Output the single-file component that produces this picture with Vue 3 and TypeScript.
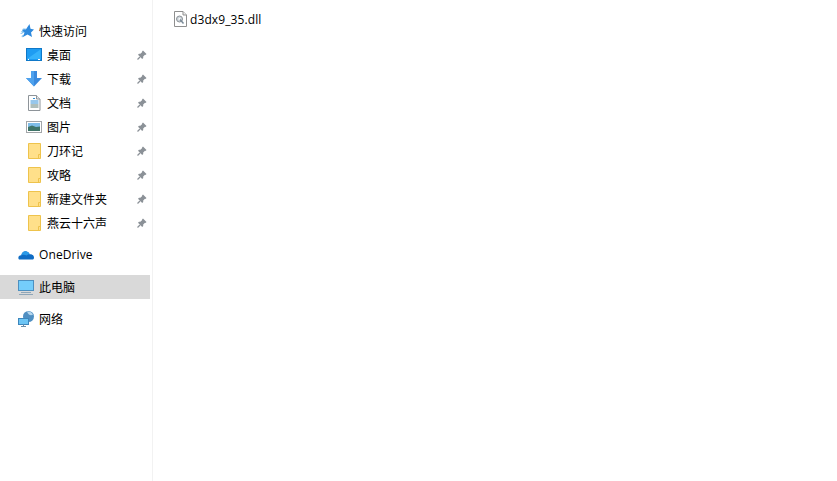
<script setup lang="ts">
interface NavItem {
  label: string
  icon: string
}

const pinned: NavItem[] = [
  { label: '桌面', icon: 'desktop' },
  { label: '下载', icon: 'download' },
  { label: '文档', icon: 'document' },
  { label: '图片', icon: 'picture' },
  { label: '刀环记', icon: 'folder' },
  { label: '攻略', icon: 'folder' },
  { label: '新建文件夹', icon: 'folder' },
  { label: '燕云十六声', icon: 'folder' },
]
</script>

<template>
  <div class="explorer">
    <aside class="sidebar">
      <div class="row top">
        <svg class="icon" viewBox="0 0 16 16">
          <path d="M3 8h3.500L6 9.500 3.500 11 2 10.500 4 9.500zM5 5.500h3L6.500 7.500H4zM3.500 13l2-1.500.5 1.500-2 1.500z" fill="#8cc6f0" />
          <path d="M11.500 1l1 4.700 3.500.8-3 3 1 4.500-4.500-2.500L5 14l1.500-4.500L4 7l4-.8z" fill="#2e8ade" />
        </svg>
        <span class="label">快速访问</span>
      </div>

      <div v-for="item in pinned" :key="item.label" class="row sub">
        <svg class="icon" viewBox="0 0 16 16">
          <template v-if="item.icon === 'desktop'">
            <rect x="0.500" y="1.500" width="15" height="12" fill="#1e9cf2" stroke="#0f78c8" />
            <path d="M1 12L14.500 2.500v9.500H1z" fill="#35b2fb" />
            <path d="M2 12.500h1M12 12.500h2" stroke="#ffffff" />
          </template>
          <template v-else-if="item.icon === 'download'">
            <path d="M5 0h6v7h5l-8 8.500L0 7h5z" fill="#3a8ade" />
            <path d="M5 0h3v15.500L0 7h5z" fill="#4ea2ee" />
          </template>
          <template v-else-if="item.icon === 'document'">
            <path d="M2.500.500h8l3.500 3.500v11.500h-11.500z" fill="#ffffff" stroke="#8e9499" />
            <path d="M10.500.500v3.500h3.500" fill="#e6e8ea" stroke="#8e9499" />
            <path d="M7 3.500h2M4.500 6h8M4.500 8h8" stroke="#2f8fd8" />
            <path d="M4.500 10h8M4.500 12h8" stroke="#5f7f78" />
          </template>
          <template v-else-if="item.icon === 'picture'">
            <rect x="0.500" y="2.500" width="15" height="11" fill="#ffffff" stroke="#a3a6a9" />
            <rect x="2" y="4" width="12" height="4" fill="#7fbde8" />
            <path d="M2 8l4-1.500L10 8l4-.5V12H2z" fill="#3f7468" />
          </template>
          <template v-else>
            <path d="M2.500.500h12v15h-12z" fill="#ffe08a" stroke="#eec34c" />
            <path d="M12.500 15.500v-4h2" fill="none" stroke="#eec34c" />
          </template>
        </svg>
        <span class="label">{{ item.label }}</span>
        <svg class="pin" viewBox="0 0 10 10">
          <path d="M6 .5L9.500 4l-1 1-.5-.2L6.200 6.600V8l-1 1L1 4.800l1-1h1.400L5.200 2 5 1.500z" fill="#8b9197" />
          <path d="M3 7L.500 9.500" stroke="#8b9197" stroke-width="1.200" />
        </svg>
      </div>

      <div class="row top gap">
        <svg class="icon" viewBox="0 0 16 16">
          <path d="M1 12.500C-.5 10.500.8 8 3.300 8.200 4 5.200 6.500 3.500 9 4.700c1.500.2 2.300 1.500 2.600 2.600 2.200-.2 4.400 1 4.400 3.100 0 1.300-.7 2.100-1.500 2.100z" fill="#0f6cc4" />
          <path d="M3.300 8.200C4 5.200 6.500 3.500 9 4.700c1.500.2 2.300 1.500 2.600 2.600-1.500 0-2.500.6-3 1.200-1.500-.8-3.500-1-5.300-.3z" fill="#2a9ae8" />
        </svg>
        <span class="label latin">OneDrive</span>
      </div>

      <div class="row top gap selected">
        <svg class="icon" viewBox="0 0 16 16">
          <rect x="0.500" y="1.500" width="15" height="10" fill="#74cdfb" stroke="#4d90c0" />
          <path d="M3 13.500h10M1 15.500h14" stroke="#8fa6b8" />
        </svg>
        <span class="label">此电脑</span>
      </div>

      <div class="row top gap">
        <svg class="icon" viewBox="0 0 16 16">
          <circle cx="10.500" cy="5.500" r="5.500" fill="#4f8fc2" />
          <path d="M9 .500c2-.500 5 .500 6 3-2 1.500-5 .500-6-3z" fill="#b5d6ee" />
          <rect x="0.500" y="7.500" width="10" height="6" fill="#6cc5f5" stroke="#3d86bc" />
          <path d="M5.500 13.500v2M3 15.500h5" stroke="#6d8ea8" />
        </svg>
        <span class="label">网络</span>
      </div>
    </aside>

    <main class="content">
      <div class="file">
        <svg class="file-icon" viewBox="0 0 14 16">
          <path d="M.500.500h8.500l3.500 3.500v11.500h-12z" fill="#ffffff" stroke="#8f8f8f" />
          <path d="M9 .500v3.500h3.500" fill="#eeeeee" stroke="#8f8f8f" />
          <circle cx="5.500" cy="8" r="3" fill="#cfd5da" stroke="#8a9096" />
          <circle cx="5.500" cy="8" r="1" fill="#ffffff" />
          <path d="M6 8.500l3.500 4" stroke="#7a8a98" stroke-width="1.500" />
        </svg>
        <span class="file-name">d3dx9_35.dll</span>
      </div>
    </main>
  </div>
</template>

<style>
html, body {
  margin: 0;
  background: #ffffff;
}
</style>

<style scoped>
.explorer {
  display: flex;
  width: 837px;
  height: 481px;
  overflow: hidden;
  background: #ffffff;
  color: #000000;
  font-family: "Noto Sans CJK SC", "Noto Sans", sans-serif;
  font-size: 12px;
}

.sidebar {
  width: 152px;
  flex: none;
  padding-top: 19px;
  border-right: 1px solid #f2f2f2;
}

.row {
  display: flex;
  align-items: center;
  width: 150px;
  height: 24px;
}

.row.top {
  padding-left: 18px;
  box-sizing: border-box;
}

.row.sub {
  padding-left: 26px;
  box-sizing: border-box;
}

.row.gap {
  margin-top: 8px;
}

.selected {
  background: #d9d9d9;
}

.icon {
  width: 16px;
  height: 16px;
  flex: none;
}

.label {
  margin-left: 5px;
  line-height: 16px;
  white-space: nowrap;
}

.latin {
  font-family: "Open Sans", "Noto Sans", sans-serif;
  letter-spacing: 0.1px;
}

.pin {
  width: 10px;
  height: 10px;
  margin-left: auto;
  margin-right: 3px;
  flex: none;
}

.content {
  flex: 1;
  padding: 11px 0 0 21px;
}

.file {
  display: flex;
  align-items: center;
  height: 16px;
}

.file-icon {
  width: 14px;
  height: 16px;
  flex: none;
}

.file-name {
  margin-left: 2px;
  font-family: "Open Sans", "Noto Sans", sans-serif;
  letter-spacing: 0.1px;
  white-space: nowrap;
}
</style>
